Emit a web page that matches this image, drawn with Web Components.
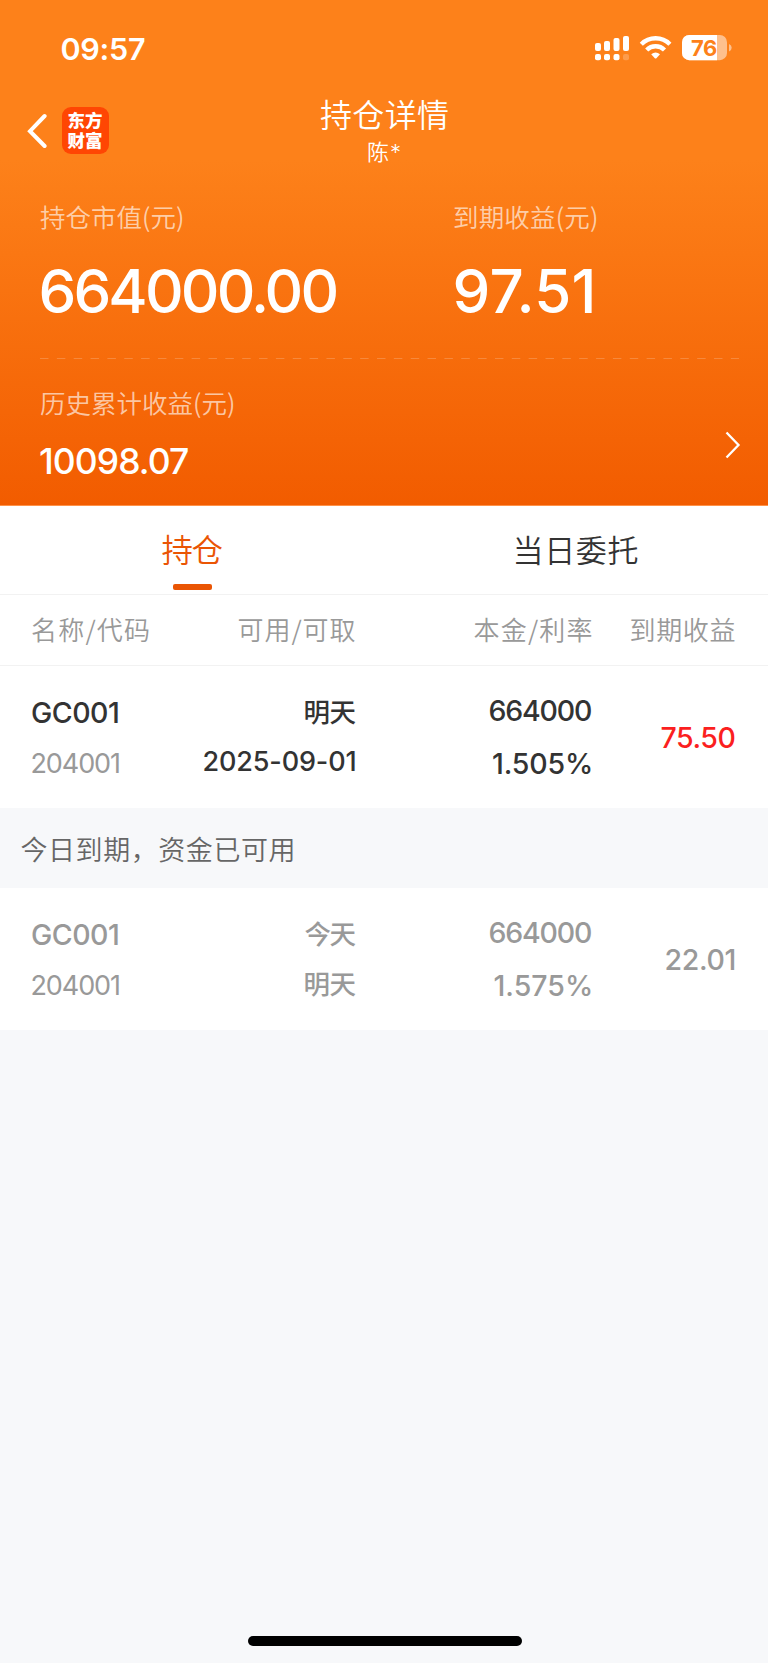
<!DOCTYPE html>
<html lang="zh-CN">
<head>
<meta charset="utf-8">
<title>持仓详情</title>
<style>
    body {
        margin: 0;
        background: #f7f8fa;
        font-family: "Noto Sans CJK SC", sans-serif;
        color: #333;
    }
</style>
</head>
<body>
<holdings-page></holdings-page>

<script>
const CJK = '"Noto Sans CJK SC", sans-serif';
const LATIN = 'Inter, "Noto Sans CJK SC", sans-serif';
const pen = document.createElement('canvas').getContext('2d');

// One line of text whose visible glyphs span exactly `w` pixels.
class FitText extends HTMLElement {
    constructor () {
        super();
        this.attachShadow({mode: 'open'});
    }

    connectedCallback () {
        var text = this.textContent.trim();
        var size = parseFloat(this.getAttribute('size'));
        var weight = this.getAttribute('weight') || '400';
        var width = parseFloat(this.getAttribute('w'));
        var family = this.hasAttribute('num') ? LATIN : CJK;

        pen.font = `${weight} ${size}px ${family}`;
        var m = pen.measureText(text);
        var ink = m.actualBoundingBoxRight + m.actualBoundingBoxLeft;
        var spacing = text.length > 1 ? (width - ink) / (text.length - 1) : 0;

        this.shadowRoot.innerHTML = `
            <style>
                :host {
                    display: block;
                    width: ${width}px;
                    height: ${size}px;
                    line-height: ${size}px;
                    font-family: ${family};
                    font-size: ${size}px;
                    font-weight: ${weight};
                    letter-spacing: ${spacing.toFixed(3)}px;
                    text-indent: ${m.actualBoundingBoxLeft.toFixed(2)}px;
                    white-space: nowrap;
                }
            </style>
            <slot></slot>
        `;
    }
}

customElements.define('fit-text', FitText);


class StatusBar extends HTMLElement {
    constructor () {
        super();
        this.attachShadow({mode: 'open'}).innerHTML = `
            <style>
                :host {
                    display: flex;
                    justify-content: space-between;
                    box-sizing: border-box;
                    height: 98px;
                    padding: 34px 36px 0 61.5px;
                }
                svg { display: block; }
            </style>
            <fit-text num size="30.5" weight="600" w="83.5">09:57</fit-text>
            <svg width="137" height="28" viewBox="595 35 137 28" fill="#fff">
                <rect x="595" y="44" width="6" height="8" rx="2"/>
                <rect x="604" y="42" width="6" height="10" rx="2"/>
                <rect x="613.5" y="39" width="6" height="13" rx="2"/>
                <rect x="623" y="37" width="6" height="15" rx="2"/>
                <rect x="595" y="55" width="6" height="6.2" rx="2"/>
                <rect x="604" y="55" width="6" height="6.2" rx="2"/>
                <rect x="613.5" y="55" width="6" height="6.2" rx="2"/>
                <rect x="623" y="55" width="6" height="6.2" rx="2" opacity=".22"/>
                <g fill="none" stroke="#fff" stroke-width="4.4">
                    <path d="M641.3 45.2a20.2 20.2 0 0 1 28.6 0"/>
                    <path d="M646.7 51a12.5 12.5 0 0 1 17.8 0"/>
                </g>
                <path d="M651.2 55.3q4.4-3.6 8.8 0l-3.6 3.9q-.8.8-1.6 0z"/>
                <clipPath id="body"><rect x="682" y="36" width="45" height="25.2" rx="7.2"/></clipPath>
                <g clip-path="url(#body)">
                    <rect x="682" y="36" width="45" height="26" opacity=".5"/>
                    <rect x="682" y="36" width="35" height="26"/>
                </g>
                <path d="M729 45q2.7 1 2.7 3.7t-2.7 3.700z" opacity=".5"/>
                <text x="704" y="56.5" text-anchor="middle" font-family="Inter, sans-serif" font-size="22" font-weight="700" letter-spacing="-.3" fill="#fd811a">76</text>
            </svg>
        `;
    }
}

customElements.define('status-bar', StatusBar);


class NavBar extends HTMLElement {
    constructor () {
        super();
        this.attachShadow({mode: 'open'}).innerHTML = `
            <style>
                :host {
                    display: grid;
                    grid-template-columns: 1fr auto 1fr;
                    height: 66px;
                    padding: 0 27px;
                }
                .left {
                    display: flex;
                    align-items: center;
                    gap: 14.5px;
                }
                .logo {
                    box-sizing: border-box;
                    width: 47px;
                    height: 47px;
                    margin-bottom: 1px;
                    padding: 3px 5px 0 6px;
                    border-radius: 9px;
                    background: #ff4603;
                    font: 900 17.5px/19.5px "Noto Sans CJK SC", sans-serif;
                }
                .title {
                    display: flex;
                    flex-direction: column;
                    align-items: center;
                    gap: 12px;
                    margin-top: -1.5px;
                }
            </style>
            <div class="left">
                <svg width="20" height="36" viewBox="0 0 20 36" fill="none" stroke="#fff" stroke-width="4" stroke-linecap="round" stroke-linejoin="miter">
                    <path d="M17.6 3L3 18.200L17.600 33"/>
                </svg>
                <div class="logo">东方财富</div>
            </div>
            <div class="title">
                <fit-text size="32" weight="350" w="128">持仓详情</fit-text>
                <fit-text num size="22" weight="350" w="32">陈*</fit-text>
            </div>
        `;
    }
}

customElements.define('nav-bar', NavBar);


class AssetSummary extends HTMLElement {
    constructor () {
        super();
        this.attachShadow({mode: 'open'}).innerHTML = `
            <style>
                :host {
                    display: block;
                    padding: 39px 27px 0 40px;
                }
                .label { color: rgba(255, 255, 255, .65); }
                .totals {
                    display: grid;
                    grid-template-columns: 414px 1fr;
                    height: 154px;
                }
                .totals .label { margin-bottom: 32.5px; }
                .totals .value { margin-left: 1.5px; }
                .line { display: block; }
                .history {
                    display: flex;
                    justify-content: space-between;
                    padding-top: 29.5px;
                }
                .history .label { margin-bottom: 29.5px; }
                .history svg { margin-top: 42.5px; }
            </style>
            <div class="totals">
                <div>
                    <fit-text class="label" size="25.5" weight="350" w="143">持仓市值(元)</fit-text>
                    <fit-text class="value" num size="60" weight="500" w="295">664000.00</fit-text>
                </div>
                <div>
                    <fit-text class="label" size="25.5" weight="350" w="143">到期收益(元)</fit-text>
                    <fit-text class="value" num size="60" weight="500" w="137">97.51</fit-text>
                </div>
            </div>
            <svg class="line" width="699" height="2">
                <path d="M0 1.5H699" stroke="#fff" stroke-opacity=".2" stroke-dasharray="8.5 8.35"/>
            </svg>
            <div class="history">
                <div>
                    <fit-text class="label" size="25.5" weight="350" w="194">历史累计收益(元)</fit-text>
                    <fit-text num size="35.5" weight="550" w="148">10098.07</fit-text>
                </div>
                <svg width="16" height="28" viewBox="0 0 16 28" fill="none" stroke="#fff" stroke-width="2.3">
                    <path d="M1.5 1.5L13.5 14L1.5 26.5"/>
                </svg>
            </div>
        `;
    }
}

customElements.define('asset-summary', AssetSummary);


class TabBar extends HTMLElement {
    constructor () {
        super();
        this.attachShadow({mode: 'open'}).innerHTML = `
            <style>
                :host {
                    display: grid;
                    grid-template-columns: 1fr 1fr;
                    height: 88px;
                    background: #fff;
                    border-bottom: 1px solid #f2f2f2;
                }
                .tab {
                    display: flex;
                    flex-direction: column;
                    align-items: center;
                    padding: 26.5px 0 0 1px;
                }
                .active { padding-left: 0; color: #ea5504; }
                .active::after {
                    content: "";
                    width: 39px;
                    height: 6px;
                    margin-top: 20px;
                    border-radius: 2px;
                    background: #ea5504;
                }
            </style>
            <div class="tab active"><fit-text size="31.5" weight="350" w="61">持仓</fit-text></div>
            <div class="tab"><fit-text size="31" weight="350" w="122">当日委托</fit-text></div>
        `;
    }
}

customElements.define('tab-bar', TabBar);


class TableHead extends HTMLElement {
    constructor () {
        super();
        this.attachShadow({mode: 'open'}).innerHTML = `
            <style>
                :host {
                    display: grid;
                    grid-template-columns: 124px 199.5px 236px 143px;
                    justify-items: end;
                    height: 70px;
                    padding: 0 33px 0 32px;
                    background: #fff;
                    border-bottom: 1px solid #f2f2f2;
                    color: #999;
                }
                fit-text { margin-top: 21px; }
                fit-text:first-of-type { justify-self: start; }
            </style>
            <fit-text size="26" weight="350" w="117">名称/代码</fit-text>
            <fit-text size="26" weight="350" w="117">可用/可取</fit-text>
            <fit-text size="26" weight="350" w="117">本金/利率</fit-text>
            <fit-text size="26" weight="350" w="104">到期收益</fit-text>
        `;
    }
}

customElements.define('table-head', TableHead);


class HoldingRow extends HTMLElement {
    constructor () {
        super();
        this.attachShadow({mode: 'open'}).innerHTML = `
            <style>
                :host {
                    display: grid;
                    grid-template-columns: 124px 199.5px 235.5px 143.5px;
                    height: 142px;
                    padding: 0 33px 0 32px;
                    background: #fff;
                    color: #333;
                }
                :host([expired]) { color: #999; }
                .cell {
                    display: flex;
                    flex-direction: column;
                    align-items: flex-end;
                }
                .name { align-items: flex-start; gap: 23px; padding-top: 32.5px; }
                .date { gap: 23.5px; padding-top: 32px; }
                .rate { gap: 24.5px; padding-top: 31px; }
                .profit { padding-top: 57.5px; }
            </style>
            <div class="cell name"><slot name="name"></slot></div>
            <div class="cell date"><slot name="date"></slot></div>
            <div class="cell rate"><slot name="rate"></slot></div>
            <div class="cell profit"><slot name="profit"></slot></div>
        `;
    }
}

customElements.define('holding-row', HoldingRow);


class HoldingsPage extends HTMLElement {
    constructor () {
        super();
        this.attachShadow({mode: 'open'}).innerHTML = `
            <style>
                :host {
                    display: flex;
                    flex-direction: column;
                    width: 768px;
                    height: 1663px;
                    overflow: hidden;
                    background: #f7f8fa;
                }
                header {
                    height: 505px;
                    color: #fff;
                    background: linear-gradient(#fd811a 0, #fd811a 160px, #f25c00 505px);
                    border-bottom: 1px solid #ff9248;
                }
                .code { margin-left: .5px; }
                .active .code { color: #999; }
                .gain { color: #fb1f20; }
                .notice {
                    height: 80px;
                    padding: 26.5px 20.5px 0;
                    box-sizing: border-box;
                    color: #666;
                }
                .home {
                    width: 274px;
                    height: 10px;
                    margin: auto auto 17px 247.5px;
                    border-radius: 5px;
                    background: #000;
                }
            </style>
            <header>
                <status-bar></status-bar>
                <nav-bar></nav-bar>
                <asset-summary></asset-summary>
            </header>
            <tab-bar></tab-bar>
            <table-head></table-head>
            <holding-row class="active">
                <fit-text slot="name" num size="28.5" weight="550" w="86">GC001</fit-text>
                <fit-text slot="name" class="code" num size="27" weight="380" w="86.5">204001</fit-text>
                <fit-text slot="date" size="26.5" weight="500" w="51">明天</fit-text>
                <fit-text slot="date" num size="27" weight="530" w="152">2025-09-01</fit-text>
                <fit-text slot="rate" num size="28.5" weight="530" w="101.5">664000</fit-text>
                <fit-text slot="rate" num size="28.5" weight="530" w="98">1.505%</fit-text>
                <fit-text slot="profit" class="gain" num size="28.5" weight="550" w="73">75.50</fit-text>
            </holding-row>
            <div class="notice"><fit-text size="27" weight="350" w="272">今日到期，资金已可用</fit-text></div>
            <holding-row expired>
                <fit-text slot="name" num size="28.5" weight="550" w="86">GC001</fit-text>
                <fit-text slot="name" class="code" num size="27" weight="380" w="86.5">204001</fit-text>
                <fit-text slot="date" size="26.5" weight="500" w="51">今天</fit-text>
                <fit-text slot="date" size="26.5" weight="500" w="51">明天</fit-text>
                <fit-text slot="rate" num size="28.5" weight="530" w="101.5">664000</fit-text>
                <fit-text slot="rate" num size="28.5" weight="530" w="96.5">1.575%</fit-text>
                <fit-text slot="profit" num size="28.5" weight="530" w="69">22.01</fit-text>
            </holding-row>
            <div class="home"></div>
        `;
    }
}

customElements.define('holdings-page', HoldingsPage);
</script>
</body>
</html>
